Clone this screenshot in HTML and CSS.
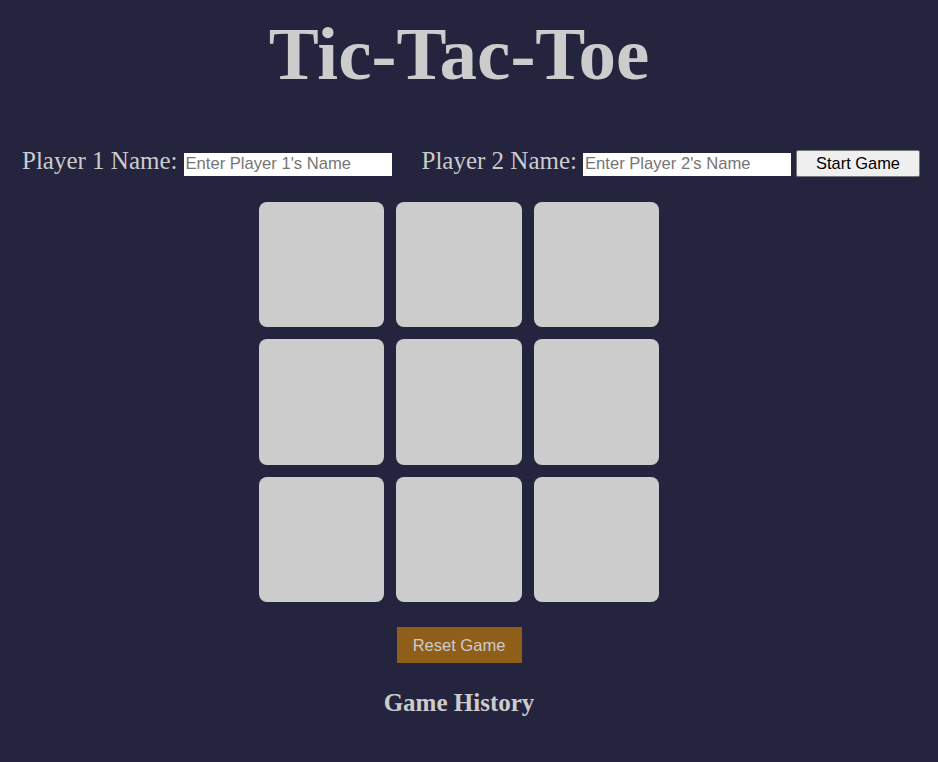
FILE: index.html
```html
<!DOCTYPE html>
<html lang="en">
<head>
<meta charset="utf-8">
<title>Tic-Tac-Toe</title>
<link rel="stylesheet" href="styles.css">
</head>
<body>
<main class="app">
  <h1 class="title">Tic-Tac-Toe</h1>
  <div class="players">
    <label class="player-label" for="p1">Player 1 Name:</label>
    <input class="player-input" id="p1" type="text" placeholder="Enter Player 1's Name">
    <label class="player-label second" for="p2">Player 2 Name:</label>
    <input class="player-input" id="p2" type="text" placeholder="Enter Player 2's Name">
    <button class="start-btn" type="button">Start Game</button>
  </div>
  <div class="board">
    <div class="cell"></div>
    <div class="cell"></div>
    <div class="cell"></div>
    <div class="cell"></div>
    <div class="cell"></div>
    <div class="cell"></div>
    <div class="cell"></div>
    <div class="cell"></div>
    <div class="cell"></div>
  </div>
  <button class="reset-btn" type="button">Reset Game</button>
  <h2 class="history-title">Game History</h2>
</main>
</body>
</html>
```

FILE: styles.css
```css
html, body {
  margin: 0;
  padding: 0;
  background: #24243e;
}

body {
  font-family: "Liberation Serif", "Times New Roman", serif;
  color: #cccccc;
  min-height: 762px;
}

.app {
  display: flex;
  flex-direction: column;
  align-items: center;
  padding-top: 14px;
  padding-right: 20px;
}

.title {
  margin: 0;
  font-size: 75px;
  font-weight: bold;
  line-height: 80px;
  color: #cccccc;
}

.players {
  align-self: stretch;
  margin-right: -20px;
  display: flex;
  justify-content: center;
  align-items: baseline;
  margin-top: 53px;
  padding-left: 4px;
}

.player-label {
  font-size: 25px;
  line-height: 28px;
  margin-right: 6px;
}

.player-label.second {
  margin-left: 30px;
}

.player-input {
  box-sizing: border-box;
  width: 208px;
  height: 23px;
  border: none;
  padding: 1px 2px;
  background: #ffffff;
  font-family: "Liberation Sans", Arial, sans-serif;
  font-size: 16.6px;
  color: #000;
}

.player-input::placeholder {
  color: #757575;
}

.start-btn {
  box-sizing: border-box;
  margin-left: 5px;
  width: 124px;
  height: 27px;
  padding: 0;
  border: 1px solid #767676;
  border-radius: 2px;
  background: #efefef;
  color: #000;
  font-family: "Liberation Sans", Arial, sans-serif;
  font-size: 16.4px;
}

.board {
  margin-top: 25px;
  width: 400px;
  height: 400px;
  display: grid;
  grid-template-columns: repeat(3, 1fr);
  grid-template-rows: repeat(3, 1fr);
  gap: 12px;
}

.cell {
  background: #cccccc;
  border-radius: 8px;
}

.reset-btn {
  margin-top: 25px;
  width: 125px;
  height: 36px;
  border: none;
  padding: 0;
  background: #8f5e19;
  color: #cccccc;
  font-family: "Liberation Sans", Arial, sans-serif;
  font-size: 16.5px;
}

.history-title {
  margin: 26px 0 0;
  font-size: 25px;
  line-height: 28px;
  font-weight: bold;
  color: #cccccc;
}
```
